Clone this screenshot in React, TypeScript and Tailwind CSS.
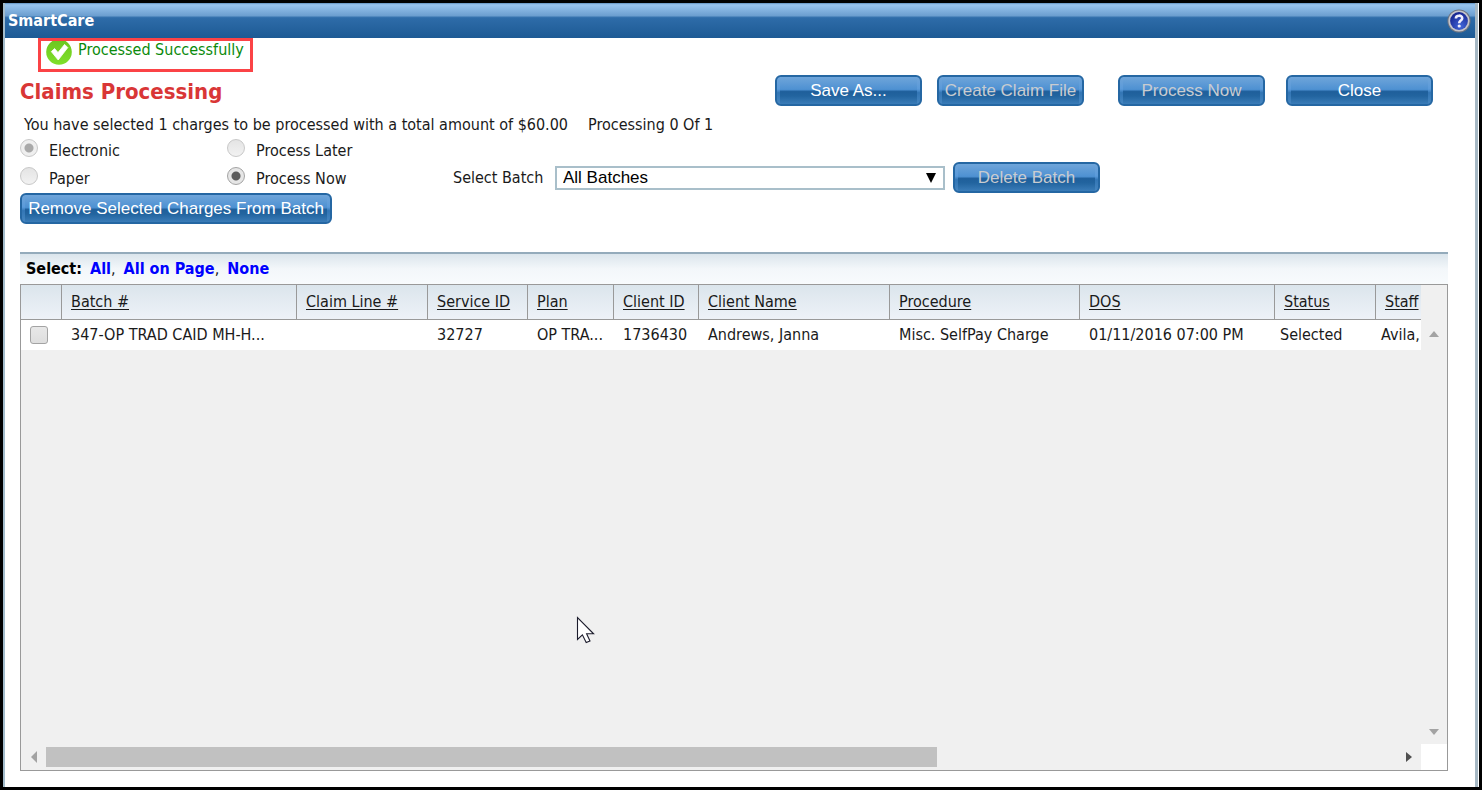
import { useState } from "react";
import clsx from "clsx";

interface Column {
    key: string,
    label: string,
    width: string,
    cellClass?: string
}

type Charge = Record<string, string>;

const columns: Column[] = [
    { key: "batch", label: "Batch #", width: "w-[235px]" },
    { key: "claimLine", label: "Claim Line #", width: "w-[131px]" },
    { key: "serviceId", label: "Service ID", width: "w-[100px]" },
    { key: "plan", label: "Plan", width: "w-[86px]" },
    { key: "clientId", label: "Client ID", width: "w-[85px]" },
    { key: "clientName", label: "Client Name", width: "w-[191px]" },
    { key: "procedure", label: "Procedure", width: "w-[190px]" },
    { key: "dos", label: "DOS", width: "w-[195px]" },
    { key: "status", label: "Status", width: "w-[101px]", cellClass: "pl-[5px]" },
    { key: "staff", label: "Staff", width: "w-[150px]", cellClass: "pl-[5px]" },
];

const charges: Charge[] = [
    {
        batch: "347-OP TRAD CAID MH-H...",
        claimLine: "",
        serviceId: "32727",
        plan: "OP TRA...",
        clientId: "1736430",
        clientName: "Andrews, Janna",
        procedure: "Misc. SelfPay Charge",
        dos: "01/11/2016 07:00 PM",
        status: "Selected",
        staff: "Avila,",
    },
];

const IconSuccess = () => (
    <svg width="26" height="26" viewBox="0 0 26 26" className="shrink-0">
        <defs>
            <linearGradient id="ok" x1="0" y1="0" x2="0" y2="1">
                <stop offset="0" stopColor="#6cc51f" />
                <stop offset="1" stopColor="#7fe02a" />
            </linearGradient>
        </defs>
        <circle cx="13" cy="11" r="12.8" fill="url(#ok)" />
        <path d="M5.3 10.6 L8.6 7.6 L12 11.6 L18.6 3.4 L21.8 6.6 L12.2 19 Z" fill="#fff" stroke="#fff" strokeWidth="0.8" strokeLinejoin="round" />
    </svg>
);

const IconHelp = () => (
    <svg width="24" height="24" viewBox="0 0 24 24">
        <defs>
            <radialGradient id="help" cx="0.6" cy="0.8" r="0.8">
                <stop offset="0" stopColor="#4166d8" />
                <stop offset="1" stopColor="#15238f" />
            </radialGradient>
        </defs>
        <circle cx="12" cy="12" r="11.6" fill="#6d7482" />
        <circle cx="12" cy="12" r="10.6" fill="#c4c4ca" />
        <circle cx="12" cy="12" r="8.9" fill="url(#help)" />
        <path d="M8.9 9.4 C8.9 5.8 15.2 5.8 15.2 9.2 C15.2 11.6 12.2 11.6 12.2 14.2" fill="none" stroke="#eef" strokeWidth="2.6" />
        <circle cx="12.2" cy="17" r="1.6" fill="#eef" />
    </svg>
);

const IconPointer = () => (
    <svg width="19" height="28" viewBox="0 0 19 28">
        <path d="M1.5 1.5 V23.5 L6.4 18.8 L10.2 26.5 L14 25 L10.6 17.8 H17.6 Z" fill="#fff" stroke="#1c1c2c" strokeWidth="1.1" />
    </svg>
);

interface ButtonProps {
    label: string,
    className?: string,
    disabled?: boolean
}

const BlueButton = ({ label, className, disabled }: ButtonProps) => (
    <button
        type="button"
        disabled={disabled}
        className={clsx(
            "h-[31px] shrink-0 overflow-hidden whitespace-nowrap rounded-[6px] border-2 border-[#2567a3] bg-[linear-gradient(#6fa4d8,#5a9ada_45%,#3376b5_58%,#4686c0)] px-[3px]",
            className ?? "w-[147px]",
            disabled ? "text-[#c9ccd0]" : "text-white",
        )}
    >
        <span className="flex h-full items-center justify-center bg-[linear-gradient(#6fa5da,#4e91d2_46%,#1f5f9b_54%,#22649f_70%,#3a7cb8)] pt-px font-['Liberation_Sans',Arial,sans-serif] text-[17px] leading-5">
            <span>{label}</span>
        </span>
    </button>
);

interface RadioProps {
    name: string,
    label: string,
    checked: boolean,
    disabled?: boolean,
    onSelect: () => void
}

const Radio = ({ name, label, checked, disabled, onSelect }: RadioProps) => (
    <label className="flex items-center gap-[11px]">
        <input
            type="radio"
            name={name}
            checked={checked}
            disabled={disabled}
            onChange={onSelect}
            className="mb-1 size-[18px] shrink-0 appearance-none rounded-full border border-[#a3a3a3] bg-linear-to-b from-[#e4e4e4] to-[#f2f2f2] checked:bg-[radial-gradient(circle,#5c5c5c_4px,#e6e6e6_5px)] disabled:border-[#c8c8c8] checked:disabled:bg-[radial-gradient(circle,#a9a9a9_4px,#efefef_5px)]"
        />
        <span className="mt-0.5">{label}</span>
    </label>
);

const Arrow = ({ points, fill, label }: { points: string, fill: string, label: string }) => (
    <button type="button" aria-label={label} className="flex size-[25px] shrink-0 items-center justify-center">
        <svg width="12" height="12" viewBox="0 0 12 12">
            <polygon points={points} fill={fill} />
        </svg>
    </button>
);

const ChargeTable = () => {

    const [selected, setSelected] = useState<number[]>([]);

    const toggle = (index: number) => {
        setSelected(selected.includes(index) ? selected.filter((i) => i !== index) : [...selected, index]);
    };

    return (
        <table className="w-[1505px] table-fixed border-separate border-spacing-0 text-left">
            <thead>
                <tr className="h-[35px] bg-linear-to-b from-[#dbe5ec] to-[#eef2f8]">
                    <th className="w-[41px] border-r border-b border-[#999]"></th>
                    {columns.map((col) => (
                        <th key={col.key} className={clsx("border-r border-b border-[#999] p-0 pl-[9px] font-normal", col.width)}>
                            <button type="button" className="underline underline-offset-2">{col.label}</button>
                        </th>
                    ))}
                </tr>
            </thead>
            <tbody>
                {charges.map((charge, index) => (
                    <tr key={index} className="h-[30px] bg-white">
                        <td className="p-0 pl-[9px]">
                            <input
                                type="checkbox"
                                aria-label="Select charge"
                                checked={selected.includes(index)}
                                onChange={() => toggle(index)}
                                className="block size-[18px] appearance-none rounded-[3px] border border-[#a3a3a3] bg-linear-to-b from-[#e8e8e8] to-[#dedede] checked:bg-[#666]"
                            />
                        </td>
                        {columns.map((col) => (
                            <td key={col.key} className={clsx("whitespace-nowrap p-0", col.cellClass ?? "pl-[9px]")}>
                                {charge[col.key]}
                            </td>
                        ))}
                    </tr>
                ))}
            </tbody>
        </table>
    );
};

const App = () => {

    const [format, setFormat] = useState("Electronic");
    const [when, setWhen] = useState("Process Now");

    return (
        <div className="relative flex min-h-screen flex-col border-3 border-black bg-white font-['DejaVu_Sans_Condensed','Noto_Sans',sans-serif] text-[16px] leading-6 text-[#1a1a1a]">
            <div className="mr-px flex flex-1 flex-col border-r-3 border-l-2 border-r-[#a6b8c4] border-l-[#a3bccb]">
                <header className="flex h-[35px] shrink-0 items-center justify-between bg-[linear-gradient(#5f8fbd,#98c4ee_5%,#6c9fd0_36%,#2e6ca9_42%,#1d5a94)] pr-1 pl-[3px]">
                    <span className="text-[16px] font-bold text-white">SmartCare</span>
                    <button type="button" aria-label="Help"><IconHelp /></button>
                </header>

                <main className="flex flex-1 flex-col pr-[27px] pb-4 pl-[15px]">
                    <div className="ml-[18px] flex h-[34px] w-[215px] shrink-0 items-start gap-[6px] border-3 border-[#fb4346] pl-[5px] text-[#0b8a0b]">
                        <IconSuccess />
                        <span className="-mt-[3px] whitespace-nowrap">Processed Successfully</span>
                    </div>

                    <div className="mt-[3px] flex h-[31px] items-center pr-[15px]">
                        <h1 className="flex-1 pt-0.5 text-[22px] font-bold text-[#d93636]">Claims Processing</h1>
                        <BlueButton label="Save As..." />
                        <BlueButton label="Create Claim File" disabled className="ml-[15px] w-[147px]" />
                        <BlueButton label="Process Now" disabled className="ml-[34px] w-[147px]" />
                        <BlueButton label="Close" className="ml-[21px] w-[147px]" />
                    </div>

                    <p className="flex gap-5 pt-[7px] pb-px pl-1">
                        <span>You have selected 1 charges to be processed with a total amount of $60.00</span>
                        <span>Processing 0 Of 1</span>
                    </p>

                    <div className="grid grid-cols-[207px_226px_1fr] grid-rows-[24px_31px] items-center">
                        <Radio name="format" label="Electronic" disabled checked={format === "Electronic"} onSelect={() => setFormat("Electronic")} />
                        <Radio name="when" label="Process Later" disabled checked={when === "Process Later"} onSelect={() => setWhen("Process Later")} />
                        <span></span>
                        <Radio name="format" label="Paper" disabled checked={format === "Paper"} onSelect={() => setFormat("Paper")} />
                        <Radio name="when" label="Process Now" checked={when === "Process Now"} onSelect={() => setWhen("Process Now")} />
                        <div className="flex items-center">
                            <label htmlFor="batch" className="w-[102px] whitespace-nowrap">Select Batch</label>
                            <div className="relative w-[390px]">
                                <select id="batch" className="block h-6 w-full appearance-none border-2 border-[#a9bfca] bg-white pl-[6px] font-['Liberation_Sans',Arial,sans-serif] text-[17px] leading-5 text-black">
                                    <option>All Batches</option>
                                </select>
                                <svg width="10" height="10" viewBox="0 0 10 10" className="pointer-events-none absolute top-[7px] right-[9px]">
                                    <polygon points="0,0 10,0 5,10" fill="#000" />
                                </svg>
                            </div>
                            <BlueButton label="Delete Batch" disabled className="ml-2 w-[147px]" />
                        </div>
                    </div>

                    <BlueButton label="Remove Selected Charges From Batch" className="w-[312px]" />

                    <div className="mt-7 flex h-8 shrink-0 items-center border-t-2 border-[#94abbb] bg-linear-to-b from-[#dbe5ec] via-[#f3f7fa] via-50% to-[#f8fbfd] pl-[6px] font-bold">
                        <span className="mr-2 text-black">Select:</span>
                        <a href="#all" className="text-[#0000ff]">All</a>
                        <span className="mr-2 font-normal">,</span>
                        <a href="#page" className="text-[#0000ff]">All on Page</a>
                        <span className="mr-2 font-normal">,</span>
                        <a href="#none" className="text-[#0000ff]">None</a>
                    </div>

                    <section className="flex flex-1 flex-col border border-[#999] bg-[#f0f0f0]">
                        <div className="flex flex-1">
                            <div className="w-0 flex-1 overflow-hidden">
                                <ChargeTable />
                            </div>
                            <div className="flex w-[26px] flex-col items-center justify-between pt-9">
                                <Arrow label="Scroll up" points="1,9 6,3 11,9" fill="#a3a3a3" />
                                <Arrow label="Scroll down" points="1,3 11,3 6,9" fill="#a3a3a3" />
                            </div>
                        </div>
                        <div className="flex h-[26px] items-center">
                            <Arrow label="Scroll left" points="9,0 9,12 3,6" fill="#a3a3a3" />
                            <div className="flex-1">
                                <div className="h-5 w-[66%] bg-[#c1c1c1]"></div>
                            </div>
                            <Arrow label="Scroll right" points="3,1 9,6 3,11" fill="#505050" />
                            <div className="h-full w-[26px] bg-white"></div>
                        </div>
                    </section>
                </main>
            </div>

            <div className="pointer-events-none absolute top-[613px] left-[573px]">
                <IconPointer />
            </div>
        </div>
    );
};

export default App;
